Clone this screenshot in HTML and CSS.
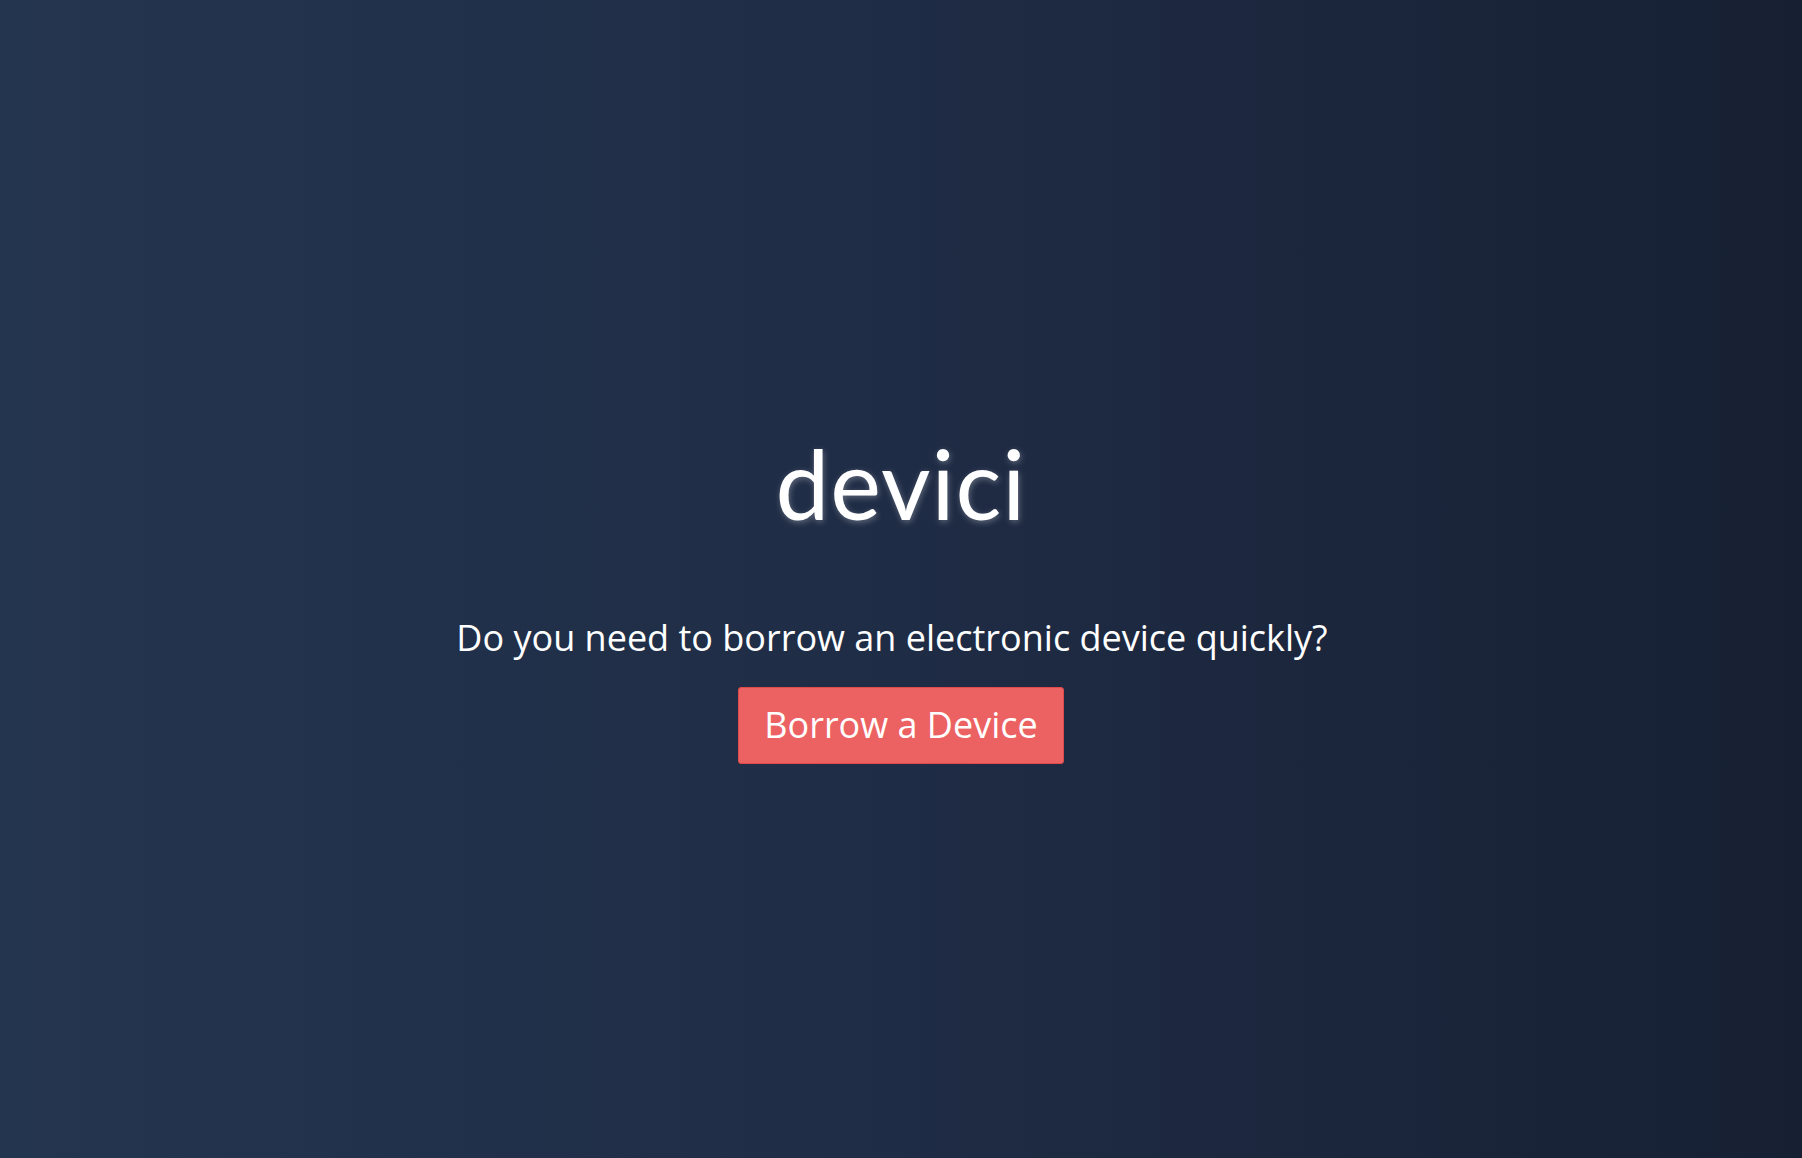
FILE: index.html
```html
<!DOCTYPE html>
<html>
<head>
<meta charset="utf-8">
<title>devici</title>
<link rel="stylesheet" href="styles.css">
</head>
<body>
<main class="hero">
  <h1 class="brand">devici</h1>
  <p class="tagline">Do you need to borrow an electronic device quickly?</p>
  <a class="cta" href="#">Borrow a Device</a>
</main>
</body>
</html>
```

FILE: styles.css
```css
html, body {
  margin: 0;
  padding: 0;
  height: 100%;
}
body {
  background: linear-gradient(90deg, #243550 0%, #1f2c45 50%, #172033 100%);
  font-family: "Open Sans", "Liberation Sans", sans-serif;
  color: #ffffff;
}
.hero {
  height: 100%;
  display: flex;
  flex-direction: column;
  align-items: center;
  box-sizing: border-box;
  padding-top: 428px;
}
.brand {
  margin: 0;
  font-family: Lato, "Open Sans", sans-serif;
  font-weight: 400;
  font-size: 96px;
  line-height: 110px;
  letter-spacing: 1px;
  text-shadow: 1px 2px 6px rgba(255, 255, 255, 0.3);
}
.tagline {
  margin: 76px 0 0;
  padding-right: 18px;
  font-size: 36px;
  line-height: 48px;
}
.cta {
  margin-top: 25px;
  display: inline-block;
  background: #ec6262;
  border: 1px solid #e04a4a;
  border-radius: 3px;
  color: #ffffff;
  text-decoration: none;
  font-size: 36px;
  line-height: 48px;
  padding: 13px 25px 14px;
}
```
